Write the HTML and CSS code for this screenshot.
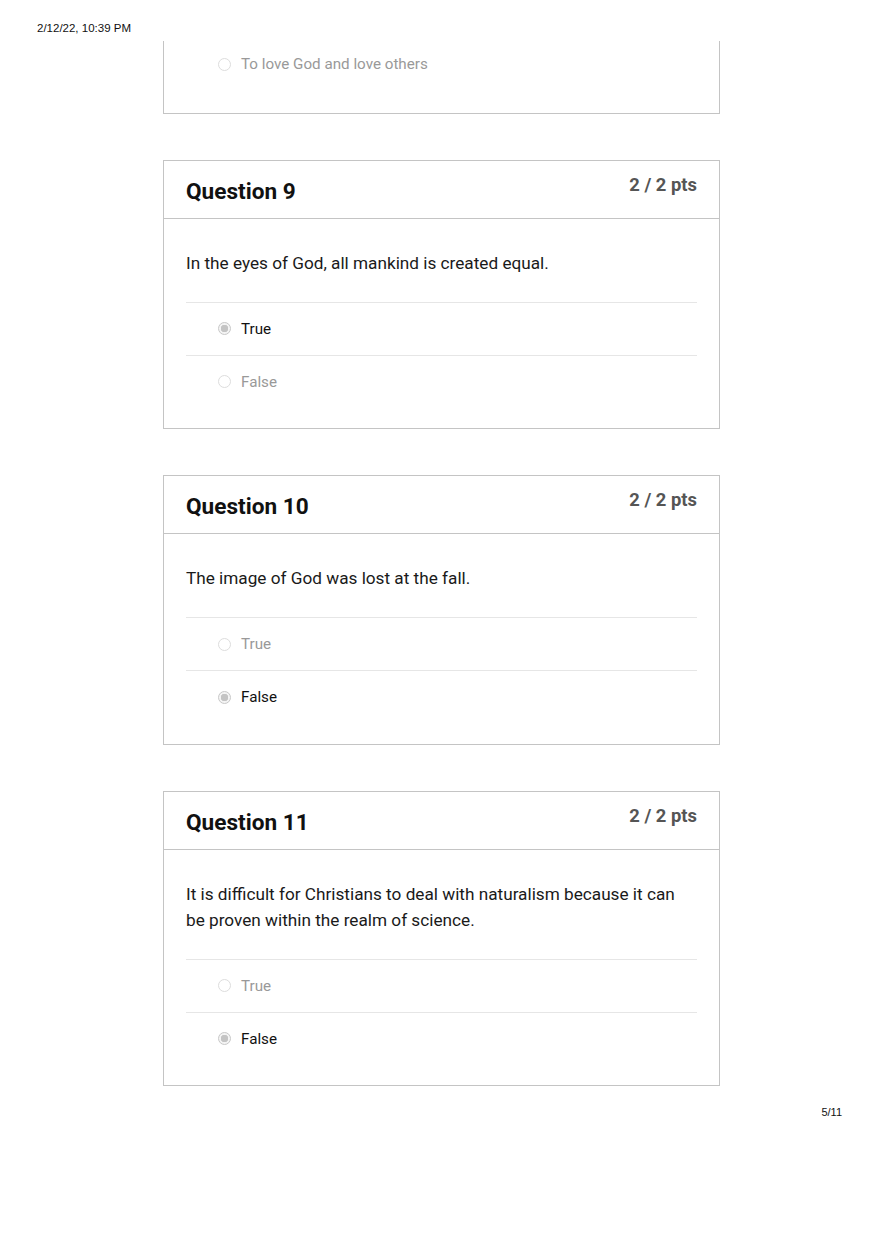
FILE: index.html
```html
<!DOCTYPE html>
<html lang="en">

<head>
    <meta charset="UTF-8">
    <meta name="viewport" content="width=device-width, initial-scale=1.0">
    <title>Quiz Results</title>
    <link rel="stylesheet" href="styles.css">
</head>

<body>
    <div class="print-header">2/12/22, 10:39 PM</div>

    <div class="quiz">
        <div class="card card-tail">
            <div class="answer answer-first">
                <span class="radio"></span>
                <span class="answer-text">To love God and love others</span>
            </div>
        </div>

        <div class="card">
            <div class="card-header">
                <h2>Question 9</h2>
                <span class="pts">2 / 2 pts</span>
            </div>
            <div class="card-body">
                <p class="question-text">In the eyes of God, all mankind is created equal.</p>
                <div class="answer selected">
                    <span class="radio"></span>
                    <span class="answer-text">True</span>
                </div>
                <div class="answer">
                    <span class="radio"></span>
                    <span class="answer-text">False</span>
                </div>
            </div>
        </div>

        <div class="card">
            <div class="card-header">
                <h2>Question 10</h2>
                <span class="pts">2 / 2 pts</span>
            </div>
            <div class="card-body">
                <p class="question-text">The image of God was lost at the fall.</p>
                <div class="answer">
                    <span class="radio"></span>
                    <span class="answer-text">True</span>
                </div>
                <div class="answer selected">
                    <span class="radio"></span>
                    <span class="answer-text">False</span>
                </div>
            </div>
        </div>

        <div class="card">
            <div class="card-header">
                <h2>Question 11</h2>
                <span class="pts">2 / 2 pts</span>
            </div>
            <div class="card-body">
                <p class="question-text">It is difficult for Christians to deal with naturalism because it can be proven within the realm of science.</p>
                <div class="answer">
                    <span class="radio"></span>
                    <span class="answer-text">True</span>
                </div>
                <div class="answer selected">
                    <span class="radio"></span>
                    <span class="answer-text">False</span>
                </div>
            </div>
        </div>
    </div>

    <div class="print-footer">5/11</div>
</body>

</html>
```

FILE: styles.css
```css
body {
    margin: 0;
    font-family: Roboto, "Liberation Sans", sans-serif;
    color: #111;
    background: #fff;
}

.print-header {
    font-family: "Liberation Sans", Arial, sans-serif;
    font-size: 11.5px;
    line-height: 13px;
    padding: 22px 0 6px 37px;
    height: 13px;
}

.quiz {
    width: 557px;
    margin-left: 163px;
}

.card {
    border: 1.5px solid #c4c4c4;
    margin-bottom: 46px;
}

.card-tail {
    border-top: none;
    height: 71.5px;
}

.card-header {
    display: flex;
    justify-content: space-between;
    align-items: flex-start;
    height: 57px;
    padding: 0 22px;
    border-bottom: 1.5px solid #c4c4c4;
}

.card-header h2 {
    margin: 0;
    padding-top: 17px;
    font-size: 22.6px;
    line-height: 28px;
    font-weight: 700;
    color: #111;
}

.pts {
    padding-top: 11px;
    font-size: 18.4px;
    line-height: 26px;
    font-weight: 700;
    color: #555;
}

.card-body {
    padding: 31px 22px 20.5px;
}

.question-text {
    margin: 0 0 26px;
    padding-right: 12px;
    font-size: 17.2px;
    line-height: 26px;
    color: #1a1a1a;
}

.answer {
    display: flex;
    align-items: center;
    height: 52px;
    padding-left: 32px;
    border-top: 1px solid #e6e6e6;
    font-size: 15.2px;
    color: #999;
}

.answer-first {
    border-top: none;
    height: 46px;
    margin-left: 22px;
}

.answer.selected {
    color: #111;
}

.radio {
    width: 13px;
    height: 13px;
    border: 1px solid #ddd;
    border-radius: 50%;
    margin-right: 10px;
    box-sizing: border-box;
    background: #fff;
}

.answer.selected .radio {
    border: 1px solid #c8c8c8;
    background: radial-gradient(circle, #c4c4c4 0 3.5px, #f4f4f4 4px);
}

.print-footer {
    font-family: "Liberation Sans", Arial, sans-serif;
    font-size: 11px;
    line-height: 13px;
    text-align: right;
    padding: 0 38px 0 0;
    margin-top: -26px;
}
```
